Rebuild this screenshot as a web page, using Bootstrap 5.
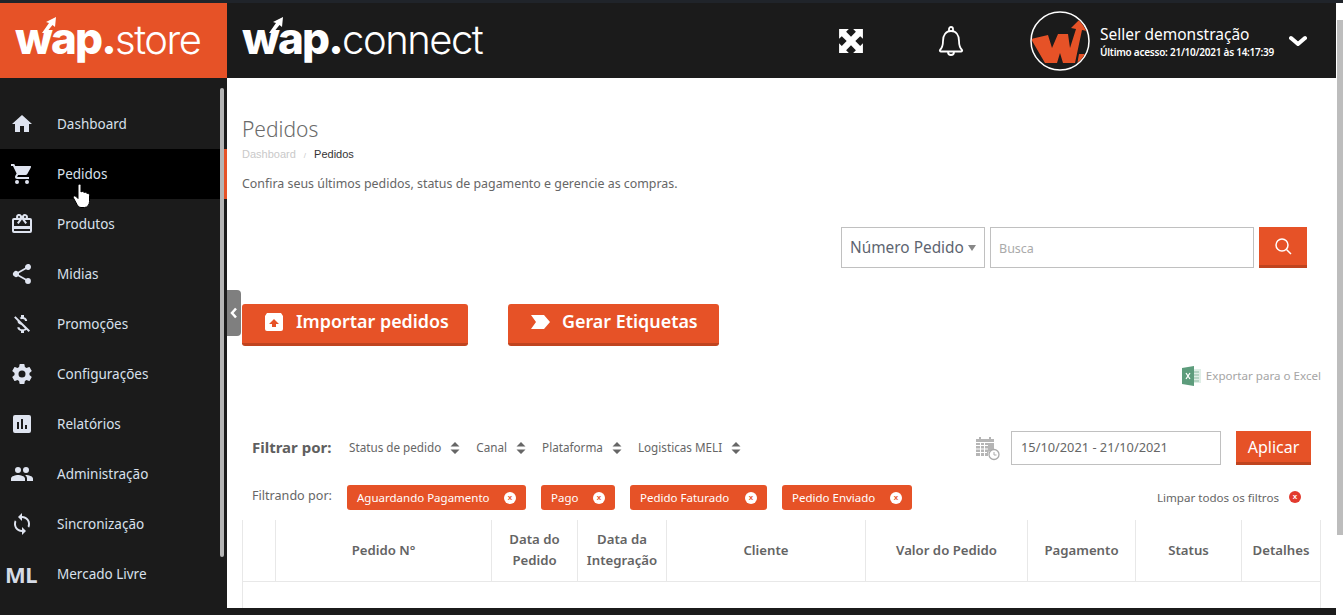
<!DOCTYPE html>
<html lang="pt-BR">
<head>
<meta charset="utf-8">
<title>Pedidos</title>
<link href="https://cdn.jsdelivr.net/npm/bootstrap@5.3.0/dist/css/bootstrap.min.css" rel="stylesheet">
<style>
:root{--wap:#e65227;--wapd:#c0441f;--ink:#1b1b1b;--tx:#636363;}
html,body{height:615px;overflow:hidden;}
body{background:#fff;font-family:"Noto Sans",sans-serif;color:var(--tx);}
.topline{height:3px;background:#20242a;}
.shellwrap{height:612px;}
.shell{width:1336px;height:612px;position:relative;background:var(--ink);flex:none;}
.brandbox{width:227px;height:75px;background:var(--wap);padding:0 0 5px 15px;}
.logo-text{color:#fff;line-height:1;white-space:nowrap;font-family:Inter,"Noto Sans",sans-serif;position:relative;}
.logo-text b{font-weight:800;letter-spacing:-1.8px;font-size:44px;}
.logo-text span{font-weight:300;letter-spacing:-1.5px;font-size:40px;}
.logo-arrow{position:absolute;width:17px;height:16px;left:25px;top:1px;}
.topbar{height:75px;padding-right:29px;}
.topbar .logo-text{margin-bottom:5px;}
.topico{width:26px;height:26px;}
.avatar{width:60px;height:60px;}
.seller{color:#fff;font-size:15.5px;line-height:18px;white-space:nowrap;}
.lastseen{color:#fff;font-size:10px;font-weight:600;letter-spacing:-.25px;line-height:13px;white-space:nowrap;margin-top:3px;}
.sidebar{width:227px;height:530px;position:relative;padding-top:21px;}
.sidebar .nav-link{height:50px;color:#d8e0ec;font-size:13.5px;padding:0;width:224px;}
.sidebar .nav-link.on{background:#000;}
.navico{width:57px;display:flex;justify-content:center;padding-right:13px;flex:none;}
.navico svg{width:24px;height:24px;fill:#dfe4f0;}
.mlmark{font-weight:700;font-size:22px;color:#d5dbe6;letter-spacing:-.5px;font-family:"Noto Sans",sans-serif;margin-left:5px;}
.sbar{position:absolute;left:220px;top:10px;width:4px;height:469px;background:#b4b4b4;border-radius:2px;}
.activemark{position:absolute;left:224px;top:71px;width:3px;height:50px;background:var(--wap);}
.handcur{position:absolute;left:72px;top:105px;width:20px;height:26px;}
.mainp{background:#fff;width:1109px;height:530px;position:relative;padding:0 15px;overflow:hidden;}
.collapser{position:absolute;left:227px;top:287px;width:14px;height:46px;background:#7f7f7f;border-radius:0 4px 4px 0;display:flex;align-items:center;justify-content:center;z-index:3;}
.pagetitle{font-size:21px;font-weight:300;color:#6a6a6a;margin:38px 0 0;line-height:27px;}
.crumbs{font-family:"Liberation Sans",sans-serif;font-size:11px;line-height:14px;margin-top:4px;color:#333;}
.crumbs i{color:#c9c9c9;font-style:normal;}
.crumbs u{text-decoration:none;color:#c9c9c9;margin:0 8px;font-size:8px;}
.descr{font-size:12.4px;line-height:18px;margin:12px 0 0;color:#666;}
.searchrow{margin-top:34px;height:41px;padding-right:14px;}
.boxed{border:1px solid #c0c0c0;background:#fff;height:41px;}
.selbox{width:144px;font-size:15.4px;padding:1px 0 0 8px;color:#5d6470;white-space:nowrap;}
.tri{width:0;height:0;border:4.5px solid transparent;border-top:6px solid #888;border-bottom:0;margin-left:4px;}
.inpbox{width:264px;margin-left:5px;padding:3px 0 0 8px;font-size:12.5px;color:#aaa;}
.orbtn{background:var(--wap);border:0;border-bottom:3px solid var(--wapd);color:#fff;border-radius:0;}
.srchbtn{width:48px;height:41px;margin-left:5px;}
.actions{margin-top:36px;gap:40px;}
.bigbtn{height:42px;border-radius:3px;font-size:17.9px;font-weight:600;white-space:nowrap;padding:0 0 4px;}
.excelrow{margin-top:20px;height:20px;font-size:11.6px;color:#a5a5a5;}
.filterrow{margin-top:45px;height:34px;padding-left:10px;}
.filterlabel{font-size:15px;font-weight:700;color:#5f5f5f;width:97px;flex:none;white-space:nowrap;padding-bottom:2px;}
.flt{font-size:11.7px;color:#666;white-space:nowrap;margin-right:16px;}
.flt svg{width:10px;height:14px;margin-left:9px;}
.datebox{width:210px;height:34px;font-size:12.8px;padding-left:9px;color:#666;margin-left:11px;}
.aplbtn{width:75px;height:34px;font-size:16px;margin-left:15px;margin-right:10px;padding:0;}
.chiprow{margin-top:20px;height:25px;padding-right:20px;}
.chiplabel{font-size:12.6px;width:95px;margin-left:10px;flex:none;color:#666;white-space:nowrap;padding-bottom:3px;}
.fchip{height:25px;background:var(--wap);color:#fff;border-radius:3px;font-size:11.5px;padding:0 10px;white-space:nowrap;margin-right:15px;justify-content:space-between;}
.xdot{width:12px;height:12px;border-radius:50%;background:#fff;color:var(--wap);font-size:8px;line-height:12px;text-align:center;font-weight:700;font-family:"Liberation Sans",sans-serif;flex:none;}
.clearall{font-size:11.6px;color:#666;white-space:nowrap;}
.clearall .xdot{background:#e23a2e;color:#fff;margin-left:10px;}
.ordertable{table-layout:fixed;width:1078px;margin:10px 0 0;border-collapse:collapse;}
.ordertable th{font-size:13.2px;font-weight:600;color:#646464;text-align:center;vertical-align:middle;line-height:21px;padding:0;height:61px;border:1px solid #e8e8e8;border-top:0;}
.ordertable td{height:40px;border:1px solid #e8e8e8;border-width:0 1px;padding:0;}
.rsbtrack{width:7px;height:612px;background:#fff;flex:none;padding:17px 0 0 1px;}
.rsbthumb{height:515px;background:#bdbdbd;}
</style>
</head>
<body>
<div class="topline"></div>
<div class="shellwrap d-flex">
<div class="shell">
  <div class="d-flex">
    <div class="brandbox d-flex align-items-center">
      <div class="logo-text">
        <svg class="logo-arrow" viewBox="0 0 17 16"><path d="M2 16 9 6 6 5 16 0 15 10 12.500 8 6 16z" fill="#fff"/></svg><b>wap.</b><span>store</span>
      </div>
    </div>
    <div class="topbar flex-grow-1 d-flex align-items-center">
      <div class="logo-text" style="margin-left:15px">
        <svg class="logo-arrow" viewBox="0 0 17 16"><path d="M2 16 9 6 6 5 16 0 15 10 12.500 8 6 16z" fill="#fff"/></svg><b>wap.</b><span>connect</span>
      </div>
      <svg class="topico ms-auto" viewBox="0 0 24 24"><path fill="#fff" d="M1 1h9L7.500 3.500 12 8l4.500-4.500L14 1h9v9l-2.500-2.500L16 12l4.500 4.500L23 14v9h-9l2.500-2.500L12 16l-4.500 4.500L10 23H1v-9l2.500 2.500L8 12 3.500 7.500 1 10z"/></svg>
      <svg class="topico" style="margin-left:73px;width:28px;height:32px" viewBox="0 0 28 32"><path fill="none" stroke="#fff" stroke-width="1.800" stroke-linejoin="round" d="M3 25c2-2 3-4 3-9 0-6 3-10 8-10s8 4 8 10c0 5 1 7 3 9 .5.800 0 1.500-1 1.500H4c-1 0-1.500-.7-1-1.500zM12 5.500V4a2 2 0 0 1 4 0v1.500M11 27a3 3 0 0 0 6 0"/></svg>
      <svg class="avatar" style="margin-left:65px" viewBox="0 0 60 60"><defs><clipPath id="av"><circle cx="30" cy="30" r="28"/></clipPath></defs><circle cx="30" cy="30" r="29" fill="#1b1b1b" stroke="#fff" stroke-width="1.500"/><g clip-path="url(#av)"><path fill="#e65227" d="M1 28 18 24 22 37 28 23H38L40 37 46 18 41 17 50 8 57 20 52 19 45 52H33L30 42 27 52H15z"/><path fill="#e65227" d="M49 43H61V54H47z"/></g></svg>
      <div style="margin-left:10px;margin-top:2px">
        <div class="seller">Seller demonstração</div>
        <div class="lastseen">Último acesso: 21/10/2021 às 14:17:39</div>
      </div>
      <svg style="margin-left:15px;width:18px;height:12px" viewBox="0 0 18 12"><path d="M2 3l7 6 7-6" fill="none" stroke="#fff" stroke-width="4" stroke-linecap="round" stroke-linejoin="round"/></svg>
    </div>
  </div>
  <div class="d-flex">
    <nav class="sidebar nav flex-column d-block">
      <a class="nav-link d-flex align-items-center"><span class="navico"><svg viewBox="0 0 24 24"><path d="M10 20v-6h4v6h5v-8h3L12 3 2 12h3v8z"/></svg></span>Dashboard</a>
      <a class="nav-link on d-flex align-items-center"><span class="navico"><svg viewBox="0 0 24 24"><path d="M7 18a2 2 0 1 0 0 4 2 2 0 0 0 0-4zM1 2v2h2l3.600 7.600L5.250 14c-.16.280-.25.610-.25 1 0 1.100.9 2 2 2h12v-2H7.420a.25.25 0 0 1-.25-.25l.03-.12.9-1.630h7.450c.75 0 1.410-.41 1.750-1.030l3.580-6.490A1 1 0 0 0 20 4H5.210l-.94-2H1zm16 16a2 2 0 1 0 0 4 2 2 0 0 0 0-4z"/></svg></span>Pedidos</a>
      <a class="nav-link d-flex align-items-center"><span class="navico"><svg viewBox="0 0 24 24"><path d="M20 6h-2.180c.11-.31.180-.65.180-1a3 3 0 0 0-5.500-1.650L12 4l-.5-.67A3 3 0 0 0 6 5c0 .35.070.69.180 1H4a2 2 0 0 0-2 2v11a2 2 0 0 0 2 2h16a2 2 0 0 0 2-2V8a2 2 0 0 0-2-2zm-5-2a1 1 0 1 1 0 2 1 1 0 0 1 0-2zM9 4a1 1 0 1 1 0 2 1 1 0 0 1 0-2zm11 15H4v-2h16zm0-5H4V8h5.080L7 10.830 8.620 12 12 7.400l3.380 4.600L17 10.830 14.920 8H20z"/></svg></span>Produtos</a>
      <a class="nav-link d-flex align-items-center"><span class="navico"><svg viewBox="0 0 24 24"><path d="M18 16.080c-.76 0-1.440.3-1.960.77L8.910 12.700c.05-.23.090-.46.090-.7s-.04-.47-.09-.7l7.050-4.110A3 3 0 1 0 15 5c0 .24.040.47.090.7L8.040 9.810a3 3 0 1 0 0 4.380l7.120 4.160c-.05.210-.08.430-.08.650a2.920 2.920 0 1 0 2.920-2.920z"/></svg></span>Midias</a>
      <a class="nav-link d-flex align-items-center"><span class="navico"><svg viewBox="0 0 24 24"><path d="M12.500 6.900c1.800 0 2.400.8 2.500 2.100h2.200c-.1-1.700-1.100-3.300-3.200-3.800V3h-3v2.200c-.5.100-1 .3-1.400.5l1.500 1.500c.4-.2.800-.3 1.400-.3zM5.500 4.200 4.100 5.600l3.400 3.400c0 2.100 1.600 3.200 3.900 3.900l3.500 3.500c-.3.500-1.100.9-2.400.9-2.100 0-2.900-.9-3-2.100H7.300c.1 2.200 1.800 3.400 3.700 3.800V21h3v-2.200c1-.2 1.800-.6 2.400-1.100l2.200 2.200 1.400-1.400z"/></svg></span>Promoções</a>
      <a class="nav-link d-flex align-items-center"><span class="navico"><svg viewBox="0 0 24 24"><path d="M19.430 12.980c.04-.32.070-.64.070-.98s-.03-.66-.07-.98l2.110-1.650a.5.500 0 0 0 .12-.64l-2-3.460a.5.500 0 0 0-.61-.22l-2.490 1a7.300 7.300 0 0 0-1.690-.98l-.38-2.650A.49.49 0 0 0 14 2h-4a.49.49 0 0 0-.49.420l-.38 2.650c-.61.250-1.170.59-1.690.98l-2.490-1a.49.49 0 0 0-.61.220l-2 3.460a.49.49 0 0 0 .12.640l2.110 1.650c-.04.320-.07.650-.07.980s.03.660.07.980l-2.110 1.650a.5.500 0 0 0-.12.640l2 3.460c.12.220.39.300.61.220l2.490-1c.52.400 1.080.73 1.690.98l.38 2.650c.03.240.24.420.49.420h4c.25 0 .46-.18.490-.42l.38-2.650c.61-.25 1.170-.59 1.690-.98l2.490 1c.23.090.49 0 .61-.22l2-3.460a.5.500 0 0 0-.12-.64zM12 15.500a3.500 3.500 0 1 1 0-7 3.500 3.500 0 0 1 0 7z"/></svg></span>Configurações</a>
      <a class="nav-link d-flex align-items-center"><span class="navico"><svg viewBox="0 0 24 24"><path d="M19 3H5a2 2 0 0 0-2 2v14a2 2 0 0 0 2 2h14a2 2 0 0 0 2-2V5a2 2 0 0 0-2-2zM9 17H7v-7h2zm4 0h-2V7h2zm4 0h-2v-4h2z"/></svg></span>Relatórios</a>
      <a class="nav-link d-flex align-items-center"><span class="navico"><svg viewBox="0 0 24 24"><path d="M16 11a3 3 0 1 0 0-6 3 3 0 0 0 0 6zm-8 0a3 3 0 1 0 0-6 3 3 0 0 0 0 6zm0 2c-2.330 0-7 1.170-7 3.500V19h14v-2.500C15 14.170 10.330 13 8 13zm8 0c-.29 0-.62.020-.97.050 1.160.84 1.970 1.970 1.970 3.450V19h6v-2.500c0-2.330-4.670-3.500-7-3.500z"/></svg></span>Administração</a>
      <a class="nav-link d-flex align-items-center"><span class="navico"><svg viewBox="0 0 24 24"><path d="M12 4V1L8 5l4 4V6a6 6 0 0 1 5.600 8.200l1.500 1.500A8 8 0 0 0 12 4zm0 14a6 6 0 0 1-5.600-8.200L4.900 8.300A8 8 0 0 0 12 20v3l4-4-4-4z"/></svg></span>Sincronização</a>
      <a class="nav-link d-flex align-items-center"><span class="navico" style="justify-content:flex-start;padding:0"><span class="mlmark">ML</span></span>Mercado Livre</a>
      <span class="sbar"></span>
      <span class="activemark"></span>
      <svg class="handcur" viewBox="0 0 20 26"><path fill="#fff" stroke="#000" stroke-width="1" d="M6 2c1-1.500 3-1 3 .5V9c1-1 2.500-.5 3 .5 1-.7 2.500-.2 3 1 1-.5 2.500 0 2.500 2v6c0 3-2 6-5 6H9c-2 0-3-1.500-4-3L1.500 15c-1-1.500 1-3 2.500-1.500L6 15.500z"/></svg>
    </nav>
    <main class="mainp">
      <h1 class="pagetitle">Pedidos</h1>
      <div class="crumbs"><i>Dashboard</i><u>/</u>Pedidos</div>
      <p class="descr">Confira seus últimos pedidos, status de pagamento e gerencie as compras.</p>
      <div class="searchrow d-flex justify-content-end">
        <div class="boxed selbox d-flex align-items-center">Número Pedido<span class="tri"></span></div>
        <div class="boxed inpbox d-flex align-items-center">Busca</div>
        <button class="orbtn srchbtn d-flex align-items-center justify-content-center" aria-label="Buscar"><svg width="18" height="18" viewBox="0 0 18 18"><circle cx="8" cy="8" r="6" fill="none" stroke="#fff" stroke-width="1.500"/><path d="M12.500 12.500 17 17" stroke="#fff" stroke-width="1.500"/></svg></button>
      </div>
      <div class="actions d-flex">
        <button class="orbtn bigbtn d-flex align-items-center" style="width:226px"><svg style="margin:0 13px 0 23px" width="18" height="19" viewBox="0 0 18 19"><path fill="#fff" d="M2 1h14l2 3v13a2 2 0 0 1-2 2H2a2 2 0 0 1-2-2V4z"/><path fill="#e65227" d="M9 7l5 5h-3v3H7v-3H4z"/></svg>Importar pedidos</button>
        <button class="orbtn bigbtn d-flex align-items-center" style="width:211px"><svg style="margin:0 12px 0 23px" width="19" height="14" viewBox="0 0 19 14"><path fill="#fff" d="M0 0h13l6 7-6 7H0l5-7z"/></svg>Gerar Etiquetas</button>
      </div>
      <div class="excelrow d-flex justify-content-end align-items-center">
        <svg class="me-1" width="20" height="20" viewBox="0 0 20 20"><path fill="#dfeee6" d="M9 3h10v14H9z"/><path stroke="#8dbba3" stroke-width="1" d="M12 6h5M12 9h5M12 12h5M12 15h5"/><path fill="#5d9c7c" d="M0 2 12 0v20L0 18z"/><path stroke="#fff" stroke-width="1.300" d="M4 7l4 6M8 7l-4 6"/></svg>Exportar para o Excel
      </div>
      <div class="filterrow d-flex align-items-center">
        <div class="filterlabel">Filtrar por:</div>
        <span class="flt d-flex align-items-center">Status de pedido<svg viewBox="0 0 10 14"><path fill="#666" d="M5 1l4.500 4.500h-9zM5 13 .5 8.500h9z"/></svg></span>
        <span class="flt d-flex align-items-center">Canal<svg viewBox="0 0 10 14"><path fill="#666" d="M5 1l4.500 4.500h-9zM5 13 .5 8.500h9z"/></svg></span>
        <span class="flt d-flex align-items-center">Plataforma<svg viewBox="0 0 10 14"><path fill="#666" d="M5 1l4.500 4.500h-9zM5 13 .5 8.500h9z"/></svg></span>
        <span class="flt d-flex align-items-center">Logisticas MELI<svg viewBox="0 0 10 14"><path fill="#666" d="M5 1l4.500 4.500h-9zM5 13 .5 8.500h9z"/></svg></span>
        <svg class="ms-auto" width="25" height="25" viewBox="0 0 25 25"><path fill="#b5b5b5" d="M1 3h18v3H1zM4 1h2v4H4zM14 1h2v4h-2zM1 7h18v8h-5a7 7 0 0 0-1 5H1z"/><path stroke="#fff" d="M1 9.500h12M1 13h12M1 16.500h11M5.500 7v13M9.500 7v13"/><circle cx="19" cy="18.500" r="5" fill="#fff" stroke="#aaa" stroke-width="1.300"/><path d="M19 16v3h2.500" fill="none" stroke="#aaa"/></svg>
        <div class="boxed datebox d-flex align-items-center">15/10/2021 - 21/10/2021</div>
        <button class="orbtn aplbtn">Aplicar</button>
      </div>
      <div class="chiprow d-flex align-items-center">
        <div class="chiplabel">Filtrando por:</div>
        <div class="fchip d-flex align-items-center" style="width:179px">Aguardando Pagamento<span class="xdot">x</span></div>
        <div class="fchip d-flex align-items-center" style="width:74px">Pago<span class="xdot">x</span></div>
        <div class="fchip d-flex align-items-center" style="width:137px">Pedido Faturado<span class="xdot">x</span></div>
        <div class="fchip d-flex align-items-center" style="width:130px">Pedido Enviado<span class="xdot">x</span></div>
        <div class="clearall ms-auto d-flex align-items-center">Limpar todos os filtros<span class="xdot">x</span></div>
      </div>
      <table class="ordertable table-borderless">
        <colgroup><col style="width:33px"><col style="width:216px"><col style="width:86px"><col style="width:89px"><col style="width:199px"><col style="width:162px"><col style="width:108px"><col style="width:106px"><col style="width:79px"></colgroup>
        <thead><tr><th></th><th>Pedido N°</th><th>Data do Pedido</th><th>Data da Integração</th><th>Cliente</th><th>Valor do Pedido</th><th>Pagamento</th><th>Status</th><th>Detalhes</th></tr></thead>
        <tbody><tr><td colspan="9"></td></tr></tbody>
      </table>
    </main>
  </div>
  <div class="collapser"><svg width="8" height="12" viewBox="0 0 8 12"><path d="M6 1.500 2 6l4 4.500" fill="none" stroke="#fff" stroke-width="2.500"/></svg></div>
</div>
<div class="rsbtrack"><div class="rsbthumb"></div></div>
</div>
<script src="https://cdn.jsdelivr.net/npm/bootstrap@5.3.0/dist/js/bootstrap.bundle.min.js"></script>
</body>
</html>
